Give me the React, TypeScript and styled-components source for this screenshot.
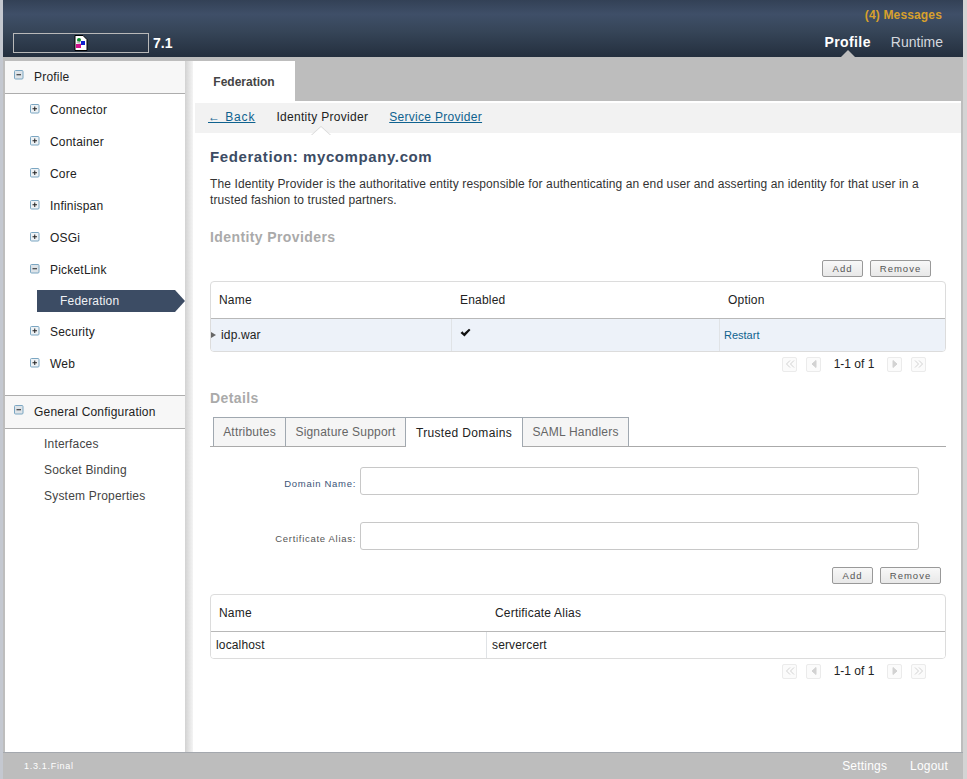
import React from 'react';
import styled, { createGlobalStyle } from 'styled-components';

const GlobalStyle = createGlobalStyle`
	html, body {
		margin: 0;
		padding: 0;
		background: #fff;
	}
	body {
		font-family: 'Liberation Sans', Arial, sans-serif;
		font-size: 12px;
		color: #222;
	}
	* {
		box-sizing: border-box;
	}
`;

const treeItems = [
	{ name: 'Connector' },
	{ name: 'Container' },
	{ name: 'Core' },
	{ name: 'Infinispan' },
	{ name: 'OSGi' },
	{ name: 'PicketLink', open: true },
	{ name: 'Security' },
	{ name: 'Web' },
];

const ToggleIcon: React.FunctionComponent<{ open?: boolean }> = ({ open }) => (
	<ToggleSvg width="10" height="10" viewBox="0 0 10 10">
		<rect x="0.5" y="0.5" width="8.5" height="8.5" rx="1" fill={open ? '#dde3e8' : '#eef2f5'} stroke="#7ba6c2" />
		<rect x="2.5" y="4.25" width="4.5" height="1" fill="#222" />
		{!open && <rect x="4.25" y="2.5" width="1" height="4.5" fill="#222" />}
	</ToggleSvg>
);

const BrokenImage = () => (
	<svg width="14" height="16" viewBox="0 0 14 16">
		<path d="M1 .5h8l4 4v11H1z" fill="#fff" stroke="#000" />
		<circle cx="5" cy="5" r="2" fill="#0a8a2a" />
		<rect x="2" y="9" width="5" height="4" fill="#d0108a" />
		<rect x="7" y="6" width="4" height="4" fill="#1020d0" />
		<path d="M2 8l3-2 2 3z" fill="#bbb" />
	</svg>
);

const PagerIcon: React.FunctionComponent<{ kind: 'first' | 'prev' | 'next' | 'last' }> = ({ kind }) => (
	<PagerBox>
		<svg width="10" height="10" viewBox="0 0 10 10" fill="none" stroke="#d2d2d2">
			{kind === 'first' && <path d="M5 1.5L1.5 5 5 8.5M9 1.5L5.5 5 9 8.5" />}
			{kind === 'last' && <path d="M1 1.5L4.5 5 1 8.5M5 1.5L8.5 5 5 8.5" />}
			{kind === 'prev' && <path d="M7 1.5v7L3 5z" fill="#d2d2d2" />}
			{kind === 'next' && <path d="M3 1.5v7L7 5z" fill="#d2d2d2" />}
		</svg>
	</PagerBox>
);

const Pager = () => (
	<PagerRow>
		<PagerIcon kind="first" />
		<PagerIcon kind="prev" />
		<PagerText>1-1 of 1</PagerText>
		<PagerIcon kind="next" />
		<PagerIcon kind="last" />
	</PagerRow>
);

const App: React.FunctionComponent = () => (
	<Frame>
		<GlobalStyle />
		<Header>
			<Messages>(4) Messages</Messages>
			<HeaderBottom>
				<Brand>
					<LogoBox>
						<BrokenImage />
					</LogoBox>
					<Version>7.1</Version>
				</Brand>
				<TopNav>
					<TopLink $active>Profile</TopLink>
					<TopLink>Runtime</TopLink>
				</TopNav>
			</HeaderBottom>
		</Header>

		<Middle>
			<Sidebar>
				<SectionHeader>
					<ToggleIcon open />
					<span>Profile</span>
				</SectionHeader>
				<Tree>
					{treeItems.map(item => (
						<React.Fragment key={item.name}>
							<TreeRow>
								<ToggleIcon open={item.open} />
								<span>{item.name}</span>
							</TreeRow>
							{item.open && <SelectedItem>Federation</SelectedItem>}
						</React.Fragment>
					))}
				</Tree>
				<SectionHeader $bordered>
					<ToggleIcon open />
					<span>General Configuration</span>
				</SectionHeader>
				<LinkList>
					<PlainItem>Interfaces</PlainItem>
					<PlainItem>Socket Binding</PlainItem>
					<PlainItem>System Properties</PlainItem>
				</LinkList>
			</Sidebar>

			<Gutter />

			<Workspace>
				<TabStrip>
					<MainTab>Federation</MainTab>
				</TabStrip>
				<Content>
					<SubNav>
						<BackLink>← Back</BackLink>
						<SubCurrent>Identity Provider</SubCurrent>
						<SubLink>Service Provider</SubLink>
					</SubNav>
					<Body>
						<Title>Federation: mycompany.com</Title>
						<Description>
							The Identity Provider is the authoritative entity responsible for authenticating an end
							user and asserting an identity for that user in a trusted fashion to trusted partners.
						</Description>
						<SectionTitle>Identity Providers</SectionTitle>
						<ToolRow $right={15} $top={15} $height={21}>
							<ToolButton $width={41}>Add</ToolButton>
							<ToolButton $width={61}>Remove</ToolButton>
						</ToolRow>
						<TableBox>
							<HeadRow $columns="241px 268px 1fr" $height={37}>
								<HeadCell $pad={8}>Name</HeadCell>
								<HeadCell $pad={8}>Enabled</HeadCell>
								<HeadCell $pad={8}>Option</HeadCell>
							</HeadRow>
							<DataRow $columns="241px 268px 1fr" $height={32} $selected>
								<DataCell $pad={10} $divider>
									<RowMarker />
									idp.war
								</DataCell>
								<DataCell $pad={9} $divider>
									<CheckMark width="11" height="9" viewBox="0 0 11 9">
										<path d="M.5 5L2.5 3.3 4 5.2 9 .8 10.5 2 4.5 8.5z" fill="#111" />
									</CheckMark>
								</DataCell>
								<DataCell $pad={4}>
									<RestartLink>Restart</RestartLink>
								</DataCell>
							</DataRow>
						</TableBox>
						<Pager />
						<DetailsTitle>Details</DetailsTitle>
						<DetailTabs>
							<DetailTab $width={73} $first>
								Attributes
							</DetailTab>
							<DetailTab $width={120}>Signature Support</DetailTab>
							<DetailTab $width={117} $active>
								Trusted Domains
							</DetailTab>
							<DetailTab $width={106}>SAML Handlers</DetailTab>
						</DetailTabs>
						<FormRow>
							<FieldLabel $blue>Domain Name:</FieldLabel>
							<FieldInput />
						</FormRow>
						<FormRow>
							<FieldLabel>Certificate Alias:</FieldLabel>
							<FieldInput />
						</FormRow>
						<ToolRow $right={5} $top={17} $height={27}>
							<ToolButton $width={41}>Add</ToolButton>
							<ToolButton $width={61}>Remove</ToolButton>
						</ToolRow>
						<TableBox>
							<HeadRow $columns="276px 1fr" $height={37}>
								<HeadCell $pad={8}>Name</HeadCell>
								<HeadCell $pad={8}>Certificate Alias</HeadCell>
							</HeadRow>
							<DataRow $columns="276px 1fr" $height={26}>
								<DataCell $pad={5} $divider>
									localhost
								</DataCell>
								<DataCell $pad={5}>servercert</DataCell>
							</DataRow>
						</TableBox>
						<Pager />
					</Body>
				</Content>
			</Workspace>
		</Middle>

		<Footer>
			<FooterVersion>1.3.1.Final</FooterVersion>
			<FooterLinks>
				<span>Settings</span>
				<span>Logout</span>
			</FooterLinks>
		</Footer>
	</Frame>
);

const Frame = styled.div`
	display: flex;
	flex-direction: column;
	width: 967px;
	height: 779px;
	overflow: hidden;
	background: #bdbdbd;
	border-left: 3px solid #c4c8d0;
	border-right: 4px solid #d4d4d4;
`;

/* ************** Header ************** */
const Header = styled.header`
	display: flex;
	flex-direction: column;
	height: 57px;
	flex-shrink: 0;
	background: linear-gradient(#334156 0%, #3f4f68 25%, #364558 55%, #242f3e 100%);
`;

const Messages = styled.div`
	align-self: flex-end;
	margin: 8px 21px 0 0;
	height: 15px;
	line-height: 15px;
	font-size: 12px;
	font-weight: 700;
	color: #d8a02c;
	letter-spacing: 0.15px;
`;

const HeaderBottom = styled.div`
	display: flex;
	justify-content: space-between;
	padding: 10px 20px 0 10px;
	flex: 1;
`;

const Brand = styled.div`
	display: flex;
	gap: 4px;
	height: 19px;
`;

const LogoBox = styled.div`
	display: flex;
	align-items: center;
	justify-content: center;
	width: 136px;
	height: 20px;
	border: 1px solid #b9b9b9;
`;

const Version = styled.span`
	font-size: 14px;
	line-height: 20px;
	font-weight: 700;
	color: #fff;
`;

const TopNav = styled.nav`
	display: flex;
	gap: 20px;
	margin-top: -1px;
`;

const TopLink = styled.span<{ $active?: boolean }>`
	position: relative;
	font-size: 14px;
	line-height: 20px;
	letter-spacing: ${props => (props.$active ? '0.4px' : '0')};
	height: 25px;
	font-weight: ${props => (props.$active ? 700 : 400)};
	color: ${props => (props.$active ? '#fff' : '#d4d8df')};
	${props =>
		props.$active &&
		`
		&::after {
			content: '';
			position: absolute;
			left: 50%;
			bottom: 0;
			margin-left: -7px;
			border-left: 7px solid transparent;
			border-right: 7px solid transparent;
			border-bottom: 7px solid #bdbdbd;
		}
	`}
`;

/* ************** Sidebar ************** */
const Middle = styled.div`
	display: flex;
	flex: 1;
	min-height: 0;
	padding: 4px 2px 0 2px;
`;

const Sidebar = styled.aside`
	width: 180px;
	flex-shrink: 0;
	background: #fff;
	letter-spacing: 0.2px;
`;

const ToggleSvg = styled.svg`
	flex-shrink: 0;
	margin-top: -3px;
`;

const SectionHeader = styled.div<{ $bordered?: boolean }>`
	display: flex;
	align-items: center;
	gap: 10px;
	height: ${props => (props.$bordered ? '34px' : '33px')};
	padding: 0 0 1px 9px;
	background: #f7f7f7;
	border-bottom: 1px solid #adadad;
	border-top: ${props => (props.$bordered ? '1px solid #adadad' : 'none')};
	color: #222;
`;

const Tree = styled.div`
	display: flex;
	flex-direction: column;
	padding-bottom: 15px;
`;

const TreeRow = styled.div`
	display: flex;
	align-items: center;
	gap: 10px;
	height: 32px;
	padding-left: 25px;
`;

const SelectedItem = styled.div`
	display: flex;
	align-items: center;
	height: 22px;
	margin: 4px 0 4px 32px;
	padding-left: 23px;
	color: #f0f2f5;
	background: #3c4c64;
	clip-path: polygon(0 0, 138px 0, 148px 50%, 138px 100%, 0 100%);
`;

const LinkList = styled.div`
	display: flex;
	flex-direction: column;
	padding: 2px 0 0 39px;
`;

const PlainItem = styled.div`
	height: 26px;
	line-height: 26px;
	font-size: 12px;
	color: #444;
`;

const Gutter = styled.div`
	width: 8px;
	flex-shrink: 0;
	background: linear-gradient(90deg, #d2d2d2, #f4f4f4);
`;

/* ************** Workspace ************** */
const Workspace = styled.main`
	display: flex;
	flex-direction: column;
	width: 768px;
	min-width: 0;
`;

const TabStrip = styled.div`
	display: flex;
	height: 40px;
	flex-shrink: 0;
	background: #bdbdbd;
`;

const MainTab = styled.div`
	width: 102px;
	padding-top: 14px;
	text-align: center;
	background: #fff;
	font-weight: 700;
	font-size: 12px;
	color: #444;
`;

const Content = styled.div`
	flex: 1;
	background: #fff;
	padding: 2px 0 0 2px;
`;

const SubNav = styled.div`
	display: flex;
	align-items: center;
	height: 30px;
	padding: 0 0 3px 13px;
	background: #f2f2f2;
	letter-spacing: 0.3px;
`;

const SubLink = styled.span`
	color: #0f628f;
	text-decoration: underline;
`;

const BackLink = styled(SubLink)`
	letter-spacing: 0.9px;
`;

const SubCurrent = styled.span`
	position: relative;
	margin: 0 21px;
	color: #222;
	&::before,
	&::after {
		content: '';
		position: absolute;
		left: 50%;
		margin-left: -11px;
		border-left: 10px solid transparent;
		border-right: 10px solid transparent;
	}
	&::before {
		bottom: -11px;
		border-bottom: 9px solid #d8d8d8;
	}
	&::after {
		bottom: -12px;
		border-bottom: 9px solid #fff;
	}
`;

const Body = styled.div`
	padding: 0 15px 0 15px;
`;

const Title = styled.h1`
	margin: 15px 0 0;
	font-size: 15px;
	line-height: 18px;
	font-weight: 700;
	letter-spacing: 0.6px;
	color: #3c4c64;
`;

const Description = styled.p`
	margin: 10px 0 0;
	font-size: 12px;
	line-height: 16px;
	letter-spacing: 0.11px;
	color: #333;
	width: 725px;
`;

const SectionTitle = styled.h2`
	margin: 21px 0 0;
	font-size: 14px;
	line-height: 16px;
	font-weight: 700;
	letter-spacing: 0.4px;
	color: #aaa;
`;

const DetailsTitle = styled(SectionTitle)`
	margin: 14px 0 0;
`;

const ToolRow = styled.div<{ $right: number; $top: number; $height: number }>`
	display: flex;
	justify-content: flex-end;
	gap: 7px;
	height: ${props => props.$height}px;
	margin-top: ${props => props.$top}px;
	padding-right: ${props => props.$right}px;
`;

const ToolButton = styled.button<{ $width: number }>`
	width: ${props => props.$width}px;
	height: 17px;
	padding: 0;
	border: 1px solid #999;
	border-radius: 2px;
	background: linear-gradient(#f8f8f8, #e8e8e8);
	font-family: inherit;
	font-size: 9.5px;
	letter-spacing: 1px;
	color: #555;
`;

const TableBox = styled.div`
	width: 736px;
	border: 1px solid #dcdcdc;
	border-radius: 4px;
	overflow: hidden;
`;

const HeadRow = styled.div<{ $columns: string; $height: number }>`
	display: grid;
	grid-template-columns: ${props => props.$columns};
	height: ${props => props.$height}px;
	border-bottom: 1px solid #b8b8b8;
`;

const HeadCell = styled.div<{ $pad: number }>`
	display: flex;
	align-items: center;
	padding-left: ${props => props.$pad}px;
	letter-spacing: 0.2px;
	color: #222;
`;

const DataRow = styled.div<{ $columns: string; $height: number; $selected?: boolean }>`
	display: grid;
	grid-template-columns: ${props => props.$columns};
	height: ${props => props.$height}px;
	background: ${props => (props.$selected ? '#edf2f9' : '#fff')};
`;

const DataCell = styled.div<{ $pad: number; $divider?: boolean }>`
	position: relative;
	display: flex;
	align-items: center;
	padding-left: ${props => props.$pad}px;
	letter-spacing: 0.15px;
	color: #222;
	border-right: ${props => (props.$divider ? '1px solid #e0e3e6' : 'none')};
`;

const RowMarker = styled.span`
	position: absolute;
	left: 0;
	top: 50%;
	margin-top: -3px;
	border-left: 5px solid #666;
	border-top: 3px solid transparent;
	border-bottom: 3px solid transparent;
`;

const CheckMark = styled.svg`
	margin: -5px 0 0 -1px;
`;

const RestartLink = styled.span`
	font-size: 11px;
	letter-spacing: 0;
	color: #0f628f;
`;

const PagerRow = styled.div`
	display: flex;
	align-items: center;
	height: 24px;
	width: 716px;
	justify-content: flex-end;
	gap: 9px;
`;

const PagerBox = styled.span`
	display: flex;
	align-items: center;
	justify-content: center;
	width: 15px;
	height: 15px;
	border: 1px solid #ebebeb;
	border-radius: 2px;
	background: #fbfbfb;
`;

const PagerText = styled.span`
	width: 48px;
	text-align: center;
	font-size: 12px;
	color: #222;
`;

const DetailTabs = styled.div`
	display: flex;
	height: 30px;
	margin-top: 11px;
	padding-left: 3px;
	width: 736px;
	border-bottom: 1px solid #aaa;
`;

const DetailTab = styled.div<{ $width: number; $active?: boolean; $first?: boolean }>`
	display: flex;
	align-items: center;
	justify-content: center;
	width: ${props => props.$width}px;
	height: ${props => (props.$active ? '30px' : '29px')};
	border: 1px solid #a0a8b0;
	border-left-width: ${props => (props.$first ? '1px' : '0')};
	border-bottom: 0;
	background: ${props => (props.$active ? '#fff' : '#f5f5f5')};
	color: ${props => (props.$active ? '#222' : '#666')};
	letter-spacing: ${props => (props.$active ? '0.35px' : '0.2px')};
	padding-top: ${props => (props.$active ? '1px' : '0')};
`;

const FormRow = styled.div`
	display: flex;
	align-items: center;
	gap: 4px;
	height: 28px;
	margin-top: 20px;
	& + & {
		margin-top: 27px;
	}
`;

const FieldLabel = styled.label<{ $blue?: boolean }>`
	width: 146px;
	text-align: right;
	font-size: 9.5px;
	letter-spacing: 0.7px;
	padding-top: 4px;
	color: ${props => (props.$blue ? '#3c5478' : '#555')};
`;

const FieldInput = styled.input`
	width: 559px;
	height: 28px;
	border: 1px solid #c8c8c8;
	border-radius: 3px;
	background: #fff;
`;

/* ************** Footer ************** */
const Footer = styled.footer`
	display: flex;
	justify-content: space-between;
	align-items: center;
	height: 27px;
	flex-shrink: 0;
	padding: 0 15px 0 21px;
	background: #bdbdbd;
	border-top: 1px solid #a4a8ae;
	color: #fff;
`;

const FooterVersion = styled.span`
	font-size: 9px;
	letter-spacing: 0.7px;
`;

const FooterLinks = styled.div`
	display: flex;
	gap: 23px;
	font-size: 12px;
	letter-spacing: 0.2px;
`;

export default App;
